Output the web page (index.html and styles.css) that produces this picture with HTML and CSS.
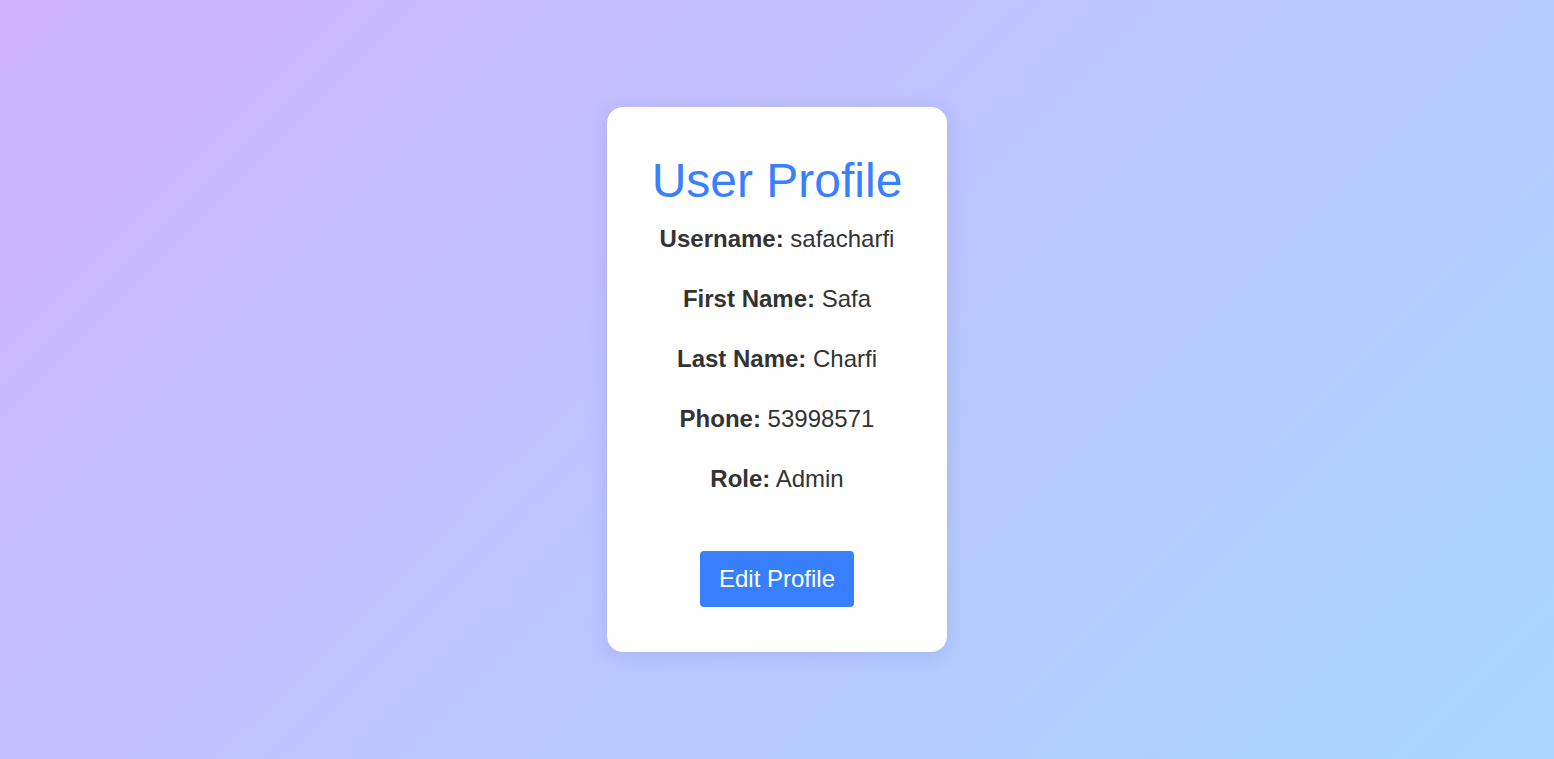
FILE: index.html
```html
<!DOCTYPE html>
<html lang="en">
<head>
<meta charset="utf-8">
<title>User Profile</title>
<link rel="stylesheet" href="styles.css">
</head>
<body>
<main class="page">
  <section class="card">
    <h1 class="title">User Profile</h1>
    <div class="fields">
      <p class="field"><strong>Username:</strong> safacharfi</p>
      <p class="field"><strong>First Name:</strong> Safa</p>
      <p class="field"><strong>Last Name:</strong> Charfi</p>
      <p class="field"><strong>Phone:</strong> 53998571</p>
      <p class="field"><strong>Role:</strong> Admin</p>
    </div>
    <button class="btn" type="button">Edit Profile</button>
  </section>
</main>
</body>
</html>
```

FILE: styles.css
```css
html, body {
  margin: 0;
  padding: 0;
  height: 100%;
}

body {
  font-family: "Liberation Sans", Arial, sans-serif;
  background: linear-gradient(135deg, #cfb3ff 0%, #a9d7ff 100%);
  color: #333;
}

.page {
  min-height: 100vh;
  display: flex;
  align-items: center;
  justify-content: center;
}

.card {
  width: 340px;
  box-sizing: border-box;
  padding: 46px 20px 45px;
  background: #fff;
  border-radius: 16px;
  box-shadow: 0 4px 18px rgba(90, 90, 180, 0.18);
  display: flex;
  flex-direction: column;
  align-items: center;
  text-align: center;
}

.title {
  margin: 0 0 17px;
  font-size: 48px;
  line-height: 55px;
  font-weight: 400;
  color: #3a7ffe;
}

.fields {
  display: flex;
  flex-direction: column;
  gap: 32px;
}

.field {
  margin: 0;
  font-size: 24px;
  line-height: 28px;
  color: #333;
}

.field strong {
  font-weight: 700;
}

.btn {
  margin-top: 58px;
  height: 56px;
  padding: 0 19px;
  border: none;
  border-radius: 4px;
  background: #387ffe;
  color: #fff;
  font-family: "Liberation Sans", Arial, sans-serif;
  font-size: 24px;
  line-height: 28px;
  cursor: pointer;
}
```
